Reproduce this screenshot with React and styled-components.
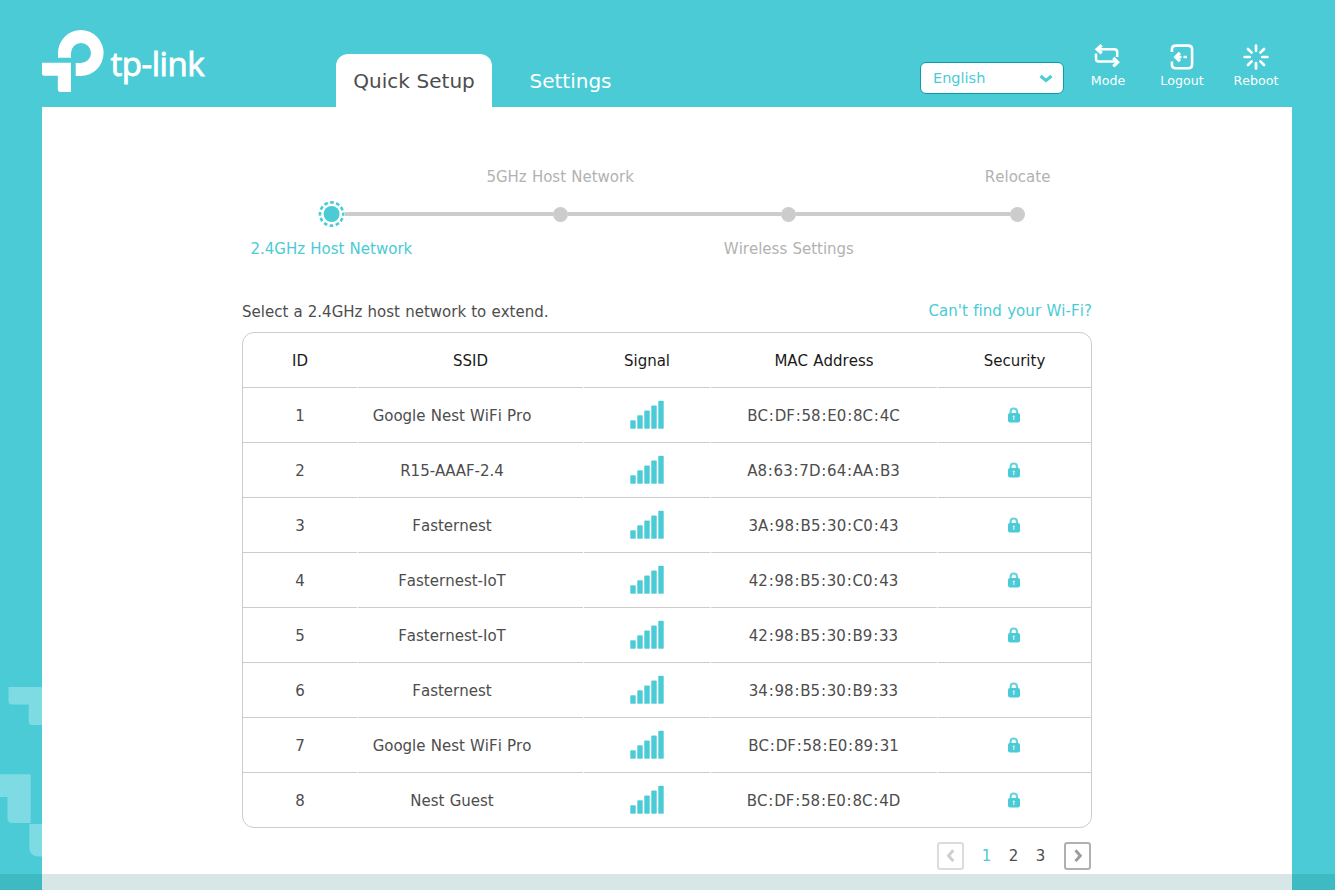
import React from 'react';
import styled, { createGlobalStyle } from 'styled-components';

const teal = '#4acbd6';
const grey = '#cccccc';

const GlobalStyle = createGlobalStyle`
  * { box-sizing: border-box; }
  body {
    margin: 0;
    background: ${teal};
    font-family: "DejaVu Sans", Verdana, sans-serif;
    font-size: 15px;
    color: #4d4d4d;
    font-kerning: none;
    word-spacing: 0.4px;
    overflow: hidden;
  }
`;

const Page = styled.div`
  width: 1335px;
  height: 890px;
  display: flex;
  flex-direction: column;
  overflow: hidden;
`;

const Header = styled.header`
  height: 107px;
  flex: none;
  padding: 0 42px;
  display: flex;
  align-items: flex-start;
`;

const Logo = styled.div`
  width: 294px;
  padding-top: 30px;
  display: flex;
  color: #fff;
`;

const Wordmark = styled.span`
  margin: 12px 0 0 6.5px;
  font: 500 33px/44px "Open Sans", sans-serif;
  letter-spacing: -0.45px;
  -webkit-text-stroke: 0.9px #fff;
  white-space: nowrap;
`;

const Tab = styled.a`
  width: ${(p) => p.$width}px;
  height: 53px;
  margin-top: 54px;
  border-radius: 12px 12px 0 0;
  background: ${(p) => (p.$active ? '#fff' : 'transparent')};
  color: ${(p) => (p.$active ? '#4d4d4d' : '#fff')};
  font-size: 20px;
  line-height: 55px;
  text-align: center;
  white-space: nowrap;
`;

const Select = styled.div`
  width: 144px;
  height: 32px;
  margin: 62px 0 0 auto;
  padding: 0 10px 0 12px;
  display: flex;
  align-items: center;
  justify-content: space-between;
  border: 1px solid #0a9ba8;
  border-radius: 6px;
  background: #fff;
  color: ${teal};
  font-size: 14.5px;
`;

const Tools = styled.nav`
  display: flex;
  margin: 42px 0 0 7px;
`;

const Tool = styled.a`
  width: 74px;
  display: flex;
  flex-direction: column;
  align-items: center;
  color: #fff;
  font-size: 12.6px;
  line-height: 18px;
  white-space: nowrap;
  svg { display: block; }
`;

const Body = styled.div`
  flex: 1;
  min-height: 0;
  display: flex;
`;

const Side = styled.aside`
  width: 42px;
  padding-top: 573px;
  svg { display: block; }
`;

const Panel = styled.main`
  width: 1250px;
  background: #fff;
`;

const Steps = styled.ol`
  list-style: none;
  margin: 0 0 0 175px;
  padding: 58px 0 0;
  display: flex;
  width: 915px;
`;

const Step = styled.li`
  flex: 1;
  display: flex;
  flex-direction: column;
  color: ${(p) => (p.$active ? teal : '#b2b2b2')};
`;

const StepLabel = styled.span`
  height: 24px;
  line-height: 24px;
  text-align: center;
  white-space: nowrap;
`;

const Track = styled.div`
  height: 28px;
  margin: 11px 0 9px;
  display: flex;
  align-items: center;
  justify-content: center;
`;

const Line = styled.i`
  flex: 1;
  height: 4px;
  background: ${(p) => (p.$hidden ? 'transparent' : grey)};
`;

const Dot = styled.i`
  width: 15px;
  height: 15px;
  border-radius: 50%;
  background: ${grey};
`;

const Content = styled.section`
  width: 850px;
  margin-left: 200px;
`;

const Caption = styled.div`
  height: 38px;
  margin-top: 33px;
  display: flex;
  justify-content: space-between;
  line-height: 36px;
  white-space: nowrap;
`;

const Link = styled.a`
  color: ${teal};
  margin-top: -1px;
  letter-spacing: 0.07px;
`;

const Table = styled.div`
  border: 1px solid ${grey};
  border-radius: 12px;
  overflow: hidden;
`;

const Row = styled.div`
  display: grid;
  grid-template-columns: 114px 225px 126px 226px 153px;
  column-gap: 1px;
  height: ${(p) => (p.$last ? 54 : 55)}px;
  color: ${(p) => (p.$head ? '#1a1a1a' : '#4d4d4d')};
  > div { border-bottom: ${(p) => (p.$last ? 0 : 1)}px solid ${grey}; }
`;

const Cell = styled.div`
  display: flex;
  align-items: center;
  justify-content: center;
  padding-top: 1px;
  padding-right: ${(p) => p.$inset || 0}px;
  white-space: pre;
  svg { margin-top: -1px; }
`;

const Colon = styled.span`
  padding: 0 0.8px;
`;

const Pager = styled.nav`
  display: flex;
  align-items: center;
  justify-content: flex-end;
  height: 28px;
  margin-top: 14px;
  padding-right: 1px;
  svg { display: block; }
`;

const PageLink = styled.a`
  width: 27px;
  text-align: center;
  color: ${(p) => (p.$active ? teal : '#4d4d4d')};
`;

const Pages = styled.div`
  display: flex;
  margin: 0 10px 0 9px;
`;

const BottomBar = styled.footer`
  position: fixed;
  left: 0;
  right: 0;
  bottom: 0;
  height: 16px;
  background: rgba(3, 94, 94, 0.155);
`;

const LogoMark = () => (
  <svg width="62" height="63" viewBox="0 0 62 63" fill="#fff">
    <path d="M16 27.7V23A22.8 23 0 1 1 38.8 46H33.7V33H39A10 10 0 1 0 29 23V27.7Z" />
    <path d="M0 32.7H29V62H18.2Q15.8 62 15.8 59.6V45.8H2Q0 45.8 0 43.8Z" />
  </svg>
);

const ModeIcon = () => (
  <svg width="30" height="30" viewBox="0 0 30 30" fill="none" stroke="#fff" strokeWidth="2.5">
    <path d="M6.5 7.2H21.4Q24.2 7.2 24.2 10V15M3 11.5V16.7Q3 19.5 5.8 19.5H22.5" />
    <path d="M8.7 3.2L4.2 7.2L8.7 11.2M20.3 16L24.6 20.2L20.3 24.4" strokeWidth="3.3" />
  </svg>
);

const LogoutIcon = () => (
  <svg width="30" height="30" viewBox="0 0 30 30" fill="none" stroke="#fff" strokeWidth="2.6">
    <path d="M4.9 10V7.5Q4.9 3.6 8.8 3.6H21.2Q25.1 3.6 25.1 7.5V22.3Q25.1 26.2 21.2 26.2H8.8Q4.9 26.2 4.9 22.3V19.5" />
    <path d="M12.9 10.8L8.7 15L12.9 19.2" strokeWidth="3.2" />
    <path d="M9.5 15H14.5M16.5 15H20" />
  </svg>
);

const RebootIcon = () => (
  <svg width="30" height="30" viewBox="0 0 30 30" fill="none" stroke="#fff" strokeWidth="2.7" strokeLinecap="round">
    {[0, 45, 90, 135, 180, 225, 270, 315].map((a) => (
      <path key={a} d="M15 3.6V8.8" transform={`rotate(${a} 15 15)`} />
    ))}
  </svg>
);

const ActiveDot = () => (
  <svg width="27" height="28" viewBox="0 0 27 28">
    <circle cx="13.6" cy="14" r="8" fill={teal} />
    <circle cx="13.6" cy="14" r="11.6" fill="none" stroke={teal} strokeWidth="2.6" strokeDasharray="3.7 2.374" strokeDashoffset="1.85" />
  </svg>
);

const SignalIcon = () => (
  <svg width="36" height="30" viewBox="0 0 36 30" fill={teal} stroke={teal} strokeOpacity="0.4">
    {[20, 15, 10.3, 5.3, 0.5].map((y, i) => (
      <rect key={y} x={1.5 + i * 7} y={y + 0.5} width="5" height={28 - y} rx="0.5" />
    ))}
  </svg>
);

const LockIcon = () => (
  <svg width="14" height="16" viewBox="1 0 14 16">
    <path d="M3.6 7V4.7Q3.6 1.5 6.8 1.5T10 4.7V7" fill="none" stroke={teal} strokeOpacity="0.85" strokeWidth="2.2" />
    <rect x="1" y="6" width="12" height="9.5" rx="2" fill={teal} />
    <path d="M6.8 8.6V13M5.7 9.5H7.9" stroke="#fff" strokeOpacity="0.75" strokeWidth="1.2" />
  </svg>
);

const PageArrow = ({ next }) => (
  <svg width="27" height="28" viewBox="0 0 27 28" fill="none" stroke={next ? '#b0b0b0' : '#dcdcdc'}>
    <rect x="1" y="1" width="25" height="26" rx="2.2" strokeWidth="2" />
    <path d={next ? 'M11.5 8.3L16.3 13.7L11.5 19.1' : 'M16.3 8.3L11.5 13.7L16.3 19.1'} strokeWidth="2.9" stroke={next ? '#9b9b9b' : '#cecece'} />
  </svg>
);

const Pattern = () => (
  <svg width="42" height="200" viewBox="0 680 42 200" fill="#7edbe3">
    <path d="M8.5 687H42V725H32Q28.7 725 28.7 721V704.5H12Q8.5 704.5 8.5 701Z" />
    <path d="M0 774.3H30.7V823H12Q7.5 823 7.5 818V797H0Z" />
    <path d="M29.3 824H42V856.5H38Q29.3 856 29.3 847Z" />
  </svg>
);

const MacAddress = ({ value }) =>
  value.split(':').map((part, i) => (
    <React.Fragment key={i}>
      {i > 0 && <Colon>:</Colon>}
      {part}
    </React.Fragment>
  ));

const steps = [
  { label: '2.4GHz Host Network', below: true, active: true },
  { label: '5GHz Host Network' },
  { label: 'Wireless Settings', below: true },
  { label: 'Relocate' },
];

const networks = [
  ['Google Nest WiFi Pro', 'BC:DF:58:E0:8C:4C'],
  ['R15-AAAF-2.4', 'A8:63:7D:64:AA:B3'],
  ['Fasternest', '3A:98:B5:30:C0:43'],
  ['Fasternest-IoT', '42:98:B5:30:C0:43'],
  ['Fasternest-IoT', '42:98:B5:30:B9:33'],
  ['Fasternest', '34:98:B5:30:B9:33'],
  ['Google Nest WiFi Pro', 'BC:DF:58:E0:89:31'],
  ['Nest Guest', 'BC:DF:58:E0:8C:4D'],
];

export default function App() {
  return (
    <Page>
      <GlobalStyle />
      <Header>
        <Logo>
          <LogoMark />
          <Wordmark>tp-link</Wordmark>
        </Logo>
        <Tab $active $width={156}>Quick Setup</Tab>
        <Tab $width={157}>Settings</Tab>
        <Select>
          English
          <svg width="14" height="10" viewBox="0 0 14 10" fill="none" stroke={teal} strokeWidth="3">
            <path d="M1.5 3L7 7.5L12.5 3" />
          </svg>
        </Select>
        <Tools>
          <Tool><ModeIcon />Mode</Tool>
          <Tool><LogoutIcon />Logout</Tool>
          <Tool><RebootIcon />Reboot</Tool>
        </Tools>
      </Header>
      <Body>
        <Side><Pattern /></Side>
        <Panel>
          <Steps>
            {steps.map((s, i) => (
              <Step key={s.label} $active={s.active}>
                <StepLabel>{s.below ? '' : s.label}</StepLabel>
                <Track>
                  <Line $hidden={i === 0} />
                  {s.active ? <ActiveDot /> : <Dot />}
                  <Line $hidden={i === steps.length - 1} />
                </Track>
                <StepLabel>{s.below ? s.label : ''}</StepLabel>
              </Step>
            ))}
          </Steps>
          <Content>
            <Caption>
              <span>Select a 2.4GHz host network to extend.</span>
              <Link>Can't find your Wi-Fi?</Link>
            </Caption>
            <Table>
              <Row $head>
                <Cell>ID</Cell>
                <Cell>SSID</Cell>
                <Cell>Signal</Cell>
                <Cell>MAC Address</Cell>
                <Cell>Security</Cell>
              </Row>
              {networks.map(([ssid, mac], i) => (
                <Row key={mac} $last={i === networks.length - 1}>
                  <Cell>{i + 1}</Cell>
                  <Cell $inset={37}>{ssid}</Cell>
                  <Cell><SignalIcon /></Cell>
                  <Cell $inset={1}><MacAddress value={mac} /></Cell>
                  <Cell><LockIcon /></Cell>
                </Row>
              ))}
            </Table>
            <Pager>
              <PageArrow />
              <Pages>
                <PageLink $active>1</PageLink>
                <PageLink>2</PageLink>
                <PageLink>3</PageLink>
              </Pages>
              <PageArrow next />
            </Pager>
          </Content>
        </Panel>
      </Body>
      <BottomBar />
    </Page>
  );
}
